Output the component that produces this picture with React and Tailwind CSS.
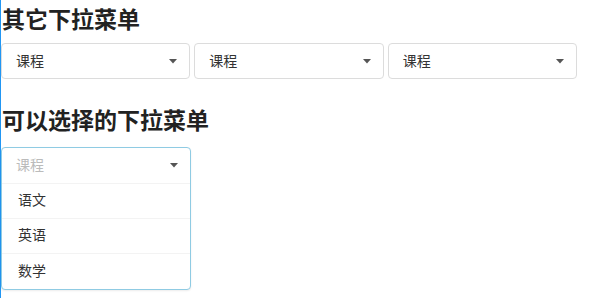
import React from "react";

const font = { fontFamily: '"Noto Sans CJK SC", "Noto Sans", sans-serif' };

function Caret() {
  return (
    <svg width="8" height="5" viewBox="0 0 8 5" className="shrink-0">
      <path d="M0 0 L8 0 L4 4.5 Z" fill="#555" />
    </svg>
  );
}

function Select() {
  return (
    <div className="flex-1 h-[36px] border border-[#dcdcdc] rounded-[4px] flex items-center justify-between pl-[14px] pr-[12px] bg-white">
      <span className="text-[14px] text-[#333] pb-[2px]">课程</span>
      <Caret />
    </div>
  );
}

export default function App() {
  return (
    <div className="min-h-[298px] border-l border-[#2196f3] bg-white" style={font}>
      <h2 className="text-[23px] leading-[36px] font-bold text-[#222] pl-[1px]">其它下拉菜单</h2>
      <div className="flex gap-[4px] w-[576px] mt-[7px]">
        <Select />
        <Select />
        <Select />
      </div>
      <h2 className="text-[23px] leading-[36px] font-bold text-[#222] pl-[1px] mt-[22px]">可以选择的下拉菜单</h2>
      <div className="w-[190px] mt-[10px] border border-[#8fcbe3] rounded-[4px] bg-white shadow-[0_1px_2px_rgba(0,0,0,0.08)]">
        <div className="h-[36px] flex items-center justify-between pl-[14px] pr-[12px] border-b border-[#f3f3f3]">
          <span className="text-[14px] text-[#bbb] pb-[3px]">课程</span>
          <Caret />
        </div>
        {["语文", "英语", "数学"].map((t, i) => (
          <div
            key={t}
            className={
              "h-[35px] flex items-center pl-[16px] pb-[3px] text-[14px] text-[#333] " +
              (i < 2 ? "border-b border-[#f3f3f3]" : "")
            }
          >
            {t}
          </div>
        ))}
      </div>
    </div>
  );
}
